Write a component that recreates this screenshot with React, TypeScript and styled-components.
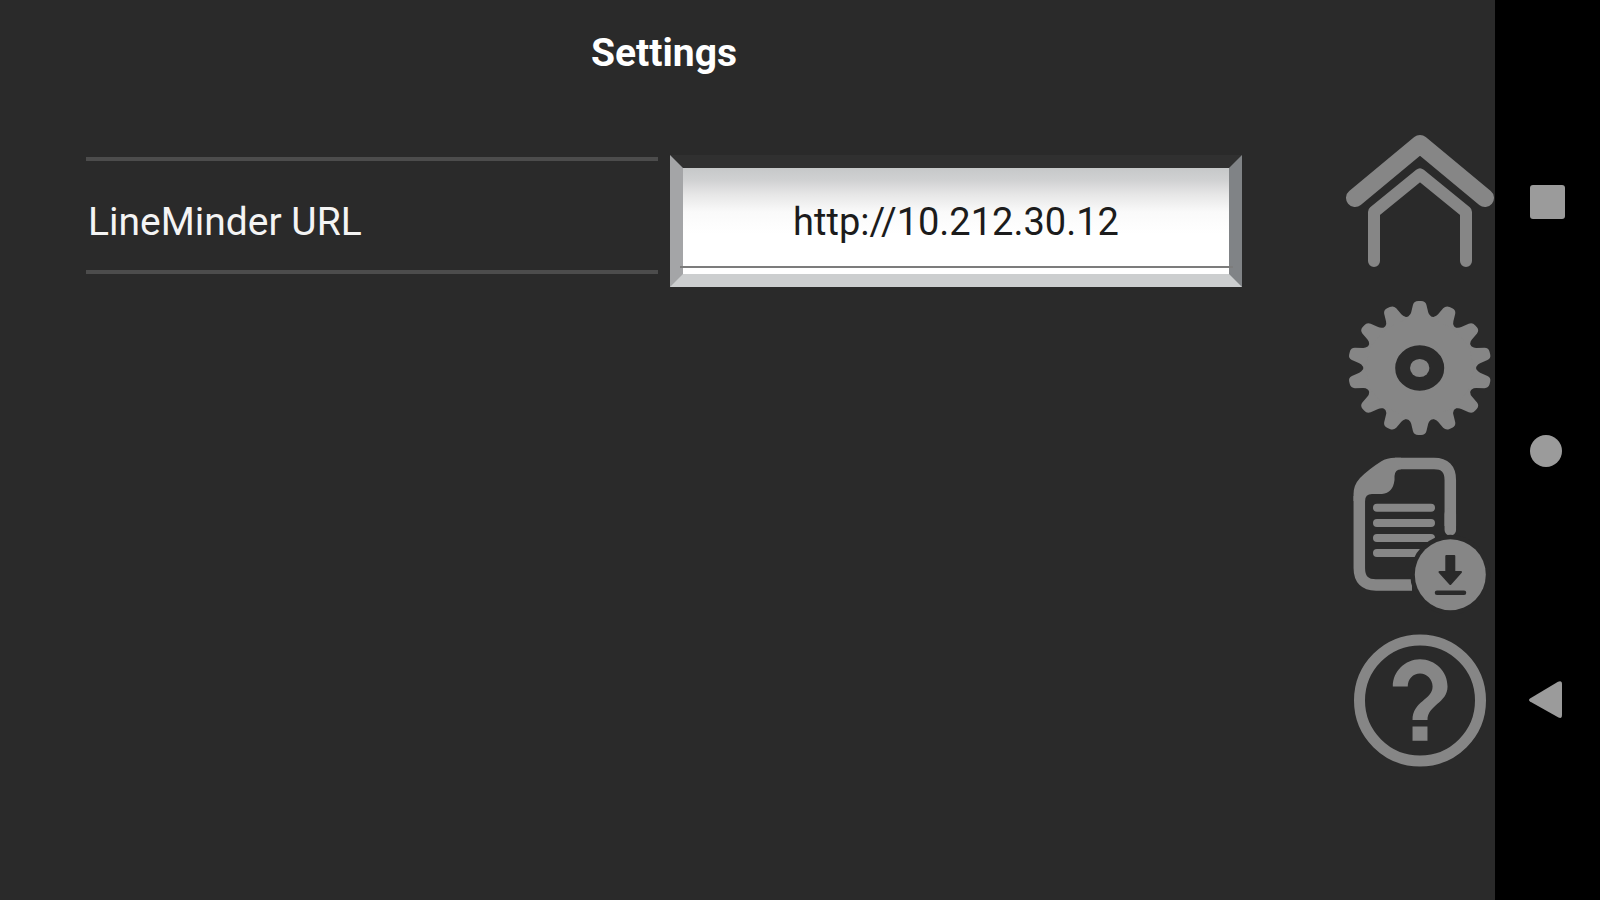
import React, { useState } from "react";
import styled, { createGlobalStyle } from "styled-components";

const GREY = "#868686";
const BACKGROUND = "#2a2a2a";

const GlobalStyle = createGlobalStyle`
  *, *::before, *::after { box-sizing: border-box; }
  body {
    margin: 0;
    background: ${BACKGROUND};
    font-family: Roboto, "Liberation Sans", sans-serif;
  }
`;

const Screen = styled.div`
  display: flex;
  min-height: 100vh;
  background: ${BACKGROUND};
  color: #f4f4f4;
`;

const Main = styled.main`
  flex: 1;
  min-width: 0;
  padding: 29px 101px 0 86px;
`;

const Title = styled.h1`
  margin: 0 0 78px;
  font-size: 39px;
  font-weight: 700;
  line-height: 48px;
  text-align: center;
  color: #fff;
`;

const SettingRow = styled.div`
  display: grid;
  grid-template-columns: 1fr 1fr;
  column-gap: 12px;
`;

const SettingLabel = styled.label`
  display: flex;
  align-items: center;
  margin: 2px 0 13px;
  padding: 12px 0 0 2px;
  border: solid #4c4c4c;
  border-width: 4px 0;
  font-size: 39px;
  line-height: 48px;
  white-space: nowrap;
`;

const Field = styled.div`
  position: relative;
  display: flex;

  &::after {
    content: "";
    position: absolute;
    left: 10px;
    right: 9px;
    bottom: 19px;
    height: 2px;
    background: #7c7c7c;
    pointer-events: none;
  }
`;

const FieldInput = styled.input`
  width: 100%;
  min-width: 0;
  height: 132px;
  padding: 2px 0 0;
  border: 13px solid;
  border-color: #303030 #808386 #cccecf #a4a5a7;
  border-radius: 0;
  outline: none;
  background: linear-gradient(#c6c8c9 0, #d0d1d2 12px, #e6e6e6 26px, #fafafa 44px, #fff 66px);
  color: #1c1c1c;
  font-family: inherit;
  font-size: 38px;
  font-weight: 400;
  line-height: 48px;
  text-align: center;
`;

const Sidebar = styled.nav`
  display: flex;
  flex: none;
  flex-direction: column;
  gap: 7px;
  padding-top: 120px;
`;

const PlainButton = styled.button`
  display: flex;
  align-items: center;
  justify-content: center;
  padding: 0;
  border: 0;
  background: none;
  cursor: pointer;
`;

const SystemBar = styled.nav`
  display: flex;
  flex: none;
  flex-direction: column;
  width: 105px;
  padding: 77px 3px 76px 0;
  background: #000;
`;

const SystemButton = styled(PlainButton)`
  flex: 1;
`;

function SideIcon({ children }: { children: React.ReactNode }) {
  return (
    <svg width="152" height="160" viewBox="0 0 152 160" fill="none" aria-hidden="true">
      {children}
    </svg>
  );
}

function HomeIcon() {
  return (
    <SideIcon>
      <g stroke={GREY} strokeLinecap="round" strokeLinejoin="round">
        <path d="M12 78 77 24 142 78" strokeWidth="18" />
        <path d="M31 141V92L77 54.500L123 92V141" strokeWidth="12" />
      </g>
    </SideIcon>
  );
}

const TEETH = Array.from({ length: 14 }, (_, i) => (i * 360) / 14);

function GearIcon() {
  return (
    <SideIcon>
      <g transform="translate(76.700 81) scale(1 .93)">
        <circle r="40.500" stroke={GREY} strokeWidth="32" />
        <circle r="9.700" fill={GREY} />
        {TEETH.map((angle) => (
          <path
            key={angle}
            transform={`rotate(${angle})`}
            d="M-12.500 -53L-11 -55.800Q-9 -57.500 -8.500 -60L-6.700 -68Q-5.500 -72 -1.500 -72H1.500Q5.500 -72 6.700 -68L8.500 -60Q9 -57.500 11 -55.800L12.500 -53Z"
            fill={GREY}
          />
        ))}
      </g>
    </SideIcon>
  );
}

function DocumentDownloadIcon() {
  return (
    <SideIcon>
      <path
        d="M52 9.500H91Q107.300 9.500 107.300 26V72M16.300 42V114Q16.300 131 33 131H69"
        stroke={GREY}
        strokeWidth="11.500"
      />
      <path d="M107.300 60V76" stroke={GREY} strokeWidth="11.500" strokeLinecap="round" />
      <path
        d="M10.550 47V40Q10.550 31 17 24Q26 15 38 7.500Q44 3.750 52 3.750H58V15.200Q52 15.200 51.500 22V26Q50 39 39 40H29Q22.050 40 22.050 47Z"
        fill={GREY}
      />
      <path
        d="M34 53.700H88M34 69H88M34 84H88M34 99H84"
        stroke={GREY}
        strokeWidth="8"
        strokeLinecap="round"
      />
      <circle cx="107.300" cy="120.700" r="40" fill={BACKGROUND} />
      <circle cx="107.300" cy="120.700" r="35.500" fill={GREY} />
      <path
        d="M103.300 102H111.300V118H118L107.300 130 96.500 118H103.300Z"
        fill={BACKGROUND}
        stroke={BACKGROUND}
        strokeWidth="2"
        strokeLinejoin="round"
      />
      <path d="M94 138.700H121" stroke={BACKGROUND} strokeWidth="4.500" strokeLinecap="round" />
    </SideIcon>
  );
}

function HelpIcon() {
  return (
    <SideIcon>
      <circle cx="77" cy="79.500" r="60.500" stroke={GREY} strokeWidth="11" />
      <path
        transform="translate(77 79) scale(6.800) translate(-12 -12)"
        d="M10.900 18h2.200v-2.100h-2.200zM12 6c-2.210 0-4 1.790-4 4h2.200c0-1.100.8-1.900 1.800-1.900s1.850.85 1.850 1.900c0 2-2.950 2.100-2.950 4.950h2.200c0-2.250 2.950-2.500 2.950-4.950 0-2.210-1.790-4-4.050-4z"
        fill={GREY}
      />
    </SideIcon>
  );
}

function SystemIcon({ children }: { children: React.ReactNode }) {
  return (
    <svg width="40" height="40" viewBox="0 0 40 40" fill="#9b9b9b" aria-hidden="true">
      {children}
    </svg>
  );
}

export default function App() {
  const [url, setUrl] = useState("http://10.212.30.12");

  return (
    <>
      <GlobalStyle />
      <Screen>
        <Main>
          <Title>Settings</Title>
          <SettingRow>
            <SettingLabel htmlFor="url">LineMinder URL</SettingLabel>
            <Field>
              <FieldInput
                id="url"
                type="text"
                spellCheck={false}
                value={url}
                onChange={(e) => setUrl(e.target.value)}
              />
            </Field>
          </SettingRow>
        </Main>
        <Sidebar aria-label="Sections">
          <PlainButton type="button" aria-label="Home">
            <HomeIcon />
          </PlainButton>
          <PlainButton type="button" aria-label="Settings">
            <GearIcon />
          </PlainButton>
          <PlainButton type="button" aria-label="Download log">
            <DocumentDownloadIcon />
          </PlainButton>
          <PlainButton type="button" aria-label="Help">
            <HelpIcon />
          </PlainButton>
        </Sidebar>
        <SystemBar aria-label="System">
          <SystemButton type="button" aria-label="Recent apps">
            <SystemIcon>
              <rect x="4" y="3" width="35" height="34" rx="3" />
            </SystemIcon>
          </SystemButton>
          <SystemButton type="button" aria-label="Home screen">
            <SystemIcon>
              <circle cx="20" cy="20" r="16" />
            </SystemIcon>
          </SystemButton>
          <SystemButton type="button" aria-label="Back">
            <SystemIcon>
              <path d="M4 18.500 32 1.700Q36 0 36 4V35Q36 39 32.500 37.500L4 21.500Q2 20 4 18.500Z" />
            </SystemIcon>
          </SystemButton>
        </SystemBar>
      </Screen>
    </>
  );
}
